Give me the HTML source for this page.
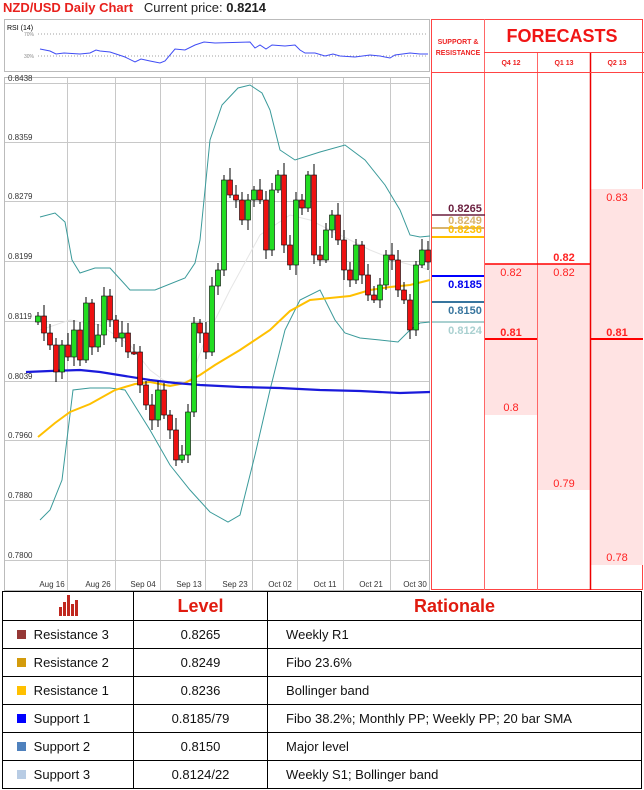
<!DOCTYPE html>
<html><head><meta charset="utf-8"><style>
body{margin:0;width:644px;height:790px;background:#fff;font-family:"Liberation Sans",sans-serif;position:relative;overflow:hidden}
.abs{position:absolute}
table{border-collapse:collapse;position:absolute;left:2px;top:591px;width:640px}
td{border:1px solid #000;height:27px;font-size:13px;color:#111;padding:0}
</style></head><body>
<div class="abs" style="left:3px;top:0;font-size:13px;line-height:16px"><b style="color:#e8211d">NZD/USD Daily Chart</b>&nbsp;&nbsp;&nbsp;<span style="color:#222">Current price: <b>0.8214</b></span></div>
<svg class="abs" style="left:0;top:0" width="644" height="592" id="s">
<rect x="4.5" y="19.5" width="425" height="52" fill="#fff" stroke="#bbb"/>
<text x="7" y="30" font-size="7" fill="#000">RSI (14)</text>
<text x="24" y="36" font-size="5" fill="#888">70%</text><text x="24" y="58" font-size="5" fill="#888">30%</text>
<line x1="38" y1="34" x2="428" y2="34" stroke="#444" stroke-dasharray="1,2" stroke-width=".6"/>
<line x1="38" y1="56" x2="428" y2="56" stroke="#444" stroke-dasharray="1,2" stroke-width=".6"/>
<polyline fill="none" stroke="#3f4cf5" stroke-width="1" points="40,49 50,51 56,54 64,53 80,54 90,53 96,50 100,51 110,52 125,57 135,62 141,59 150,61 160,63 165,61 175,49 185,50 195,45 204,42 215,43 250,42 255,48 260,45 266,49 272,45 285,46 295,45 300,50 305,53 315,53 325,56 333,54 340,56 355,57 370,55 380,56 390,58 395,55 410,53 420,54 428,54"/>
<rect x="4.5" y="77.5" width="425" height="513" fill="#fff" stroke="#bbb"/>
<g id="grid" stroke="#c8c8c8" stroke-width="1"></g>
<g font-size="8" fill="#333" id="lab"></g>
<polyline fill="none" stroke="#e6e6e6" stroke-width="1" points="40,330 70,320 100,325 130,345 150,370 170,385 190,380 205,340 230,290 260,235 290,215 310,220 340,235 370,250 400,262 430,270"/>
<polyline fill="none" stroke="#3a9a9a" stroke-width="1" points="40,217 55,213 65,222 72,260 80,273 95,268 110,268 130,290 155,290 185,278 195,263 200,240 210,140 222,105 238,88 250,85 262,93 270,110 280,150 295,160 320,152 345,145 365,160 385,185 400,210 410,235 420,237 430,236"/>
<polyline fill="none" stroke="#3a9a9a" stroke-width="1" points="40,520 50,510 62,480 73,390 90,388 110,388 125,390 150,430 170,465 190,490 210,512 228,522 240,515 255,455 270,390 285,330 300,300 320,290 335,320 345,333 360,338 380,340 398,342 410,330 420,323 430,322"/>
<polyline fill="none" stroke="#ffc000" stroke-width="2" points="38,437 55,423 70,412 90,404 115,390 135,384 150,382 170,386 185,383 200,375 215,365 240,350 270,330 290,311 310,300 330,298 350,296 370,290 390,287 410,285 430,280"/>
<polyline fill="none" stroke="#1a1adb" stroke-width="2.2" points="26,372 50,371 80,370 100,372 125,376 150,380 175,383 200,385 240,387 280,388 320,390 360,391 400,393 430,392"/>
<g id="c"></g>
<!-- right panel -->
<rect x="431.5" y="19.5" width="211" height="570" fill="none" stroke="#f44"/>
<rect x="485" y="264" width="52" height="151" fill="#ffe3e3"/>
<rect x="538" y="264" width="52" height="226" fill="#ffe3e3"/>
<rect x="591" y="189" width="52" height="376" fill="#ffe3e3"/>
<line x1="484.5" y1="19" x2="484.5" y2="590" stroke="#f66"/>
<line x1="537.5" y1="52" x2="537.5" y2="590" stroke="#f66"/>
<line x1="590.5" y1="52" x2="590.5" y2="590" stroke="#e00" stroke-width="1.5"/>
<line x1="484" y1="52.5" x2="644" y2="52.5" stroke="#f44"/>
<line x1="431" y1="72.5" x2="644" y2="72.5" stroke="#f44"/>
<text x="562" y="42" font-size="18" font-weight="bold" fill="#f01515" text-anchor="middle">FORECASTS</text>
<text x="458" y="44" font-size="7" font-weight="bold" fill="#e22" text-anchor="middle">SUPPORT &amp;</text>
<text x="458" y="55" font-size="7" font-weight="bold" fill="#e22" text-anchor="middle">RESISTANCE</text>
<g font-size="7" font-weight="bold" fill="#e22" text-anchor="middle"><text x="511" y="65">Q4 12</text><text x="564" y="65">Q1 13</text><text x="617" y="65">Q2 13</text></g>
<line x1="485" y1="264" x2="590" y2="264" stroke="#f00" stroke-width="1.5"/>
<line x1="485" y1="339" x2="537" y2="339" stroke="#f00" stroke-width="2"/>
<line x1="591" y1="339" x2="643" y2="339" stroke="#f00" stroke-width="2"/>
<g font-size="11" fill="#f22" text-anchor="middle">
<text x="511" y="276">0.82</text><text x="564" y="276">0.82</text><text x="617" y="201">0.83</text>
<text x="511" y="411">0.8</text><text x="564" y="487">0.79</text><text x="617" y="561">0.78</text>
<g font-weight="bold"><text x="511" y="336">0.81</text><text x="564" y="261">0.82</text><text x="617" y="336">0.81</text></g></g>
<line x1="432" y1="215" x2="485" y2="215" stroke="#6b1f3f" stroke-width="1.5"/>
<line x1="432" y1="228" x2="484" y2="228" stroke="#d9b46c" stroke-width="2"/>
<line x1="432" y1="237" x2="484" y2="237" stroke="#ffc000" stroke-width="2"/>
<line x1="432" y1="276" x2="484" y2="276" stroke="#00f" stroke-width="2"/>
<line x1="432" y1="302" x2="484" y2="302" stroke="#37759e" stroke-width="2"/>
<line x1="432" y1="322" x2="484" y2="322" stroke="#a9d0d0" stroke-width="2"/>
<g font-size="11" font-weight="bold" text-anchor="middle">
<text x="465" y="212" fill="#6b1f3f">0.8265</text><text x="465" y="224" fill="#d9b46c">0.8249</text><text x="465" y="233" fill="#ffc000">0.8236</text>
<text x="465" y="288" fill="#0000ee">0.8185</text><text x="465" y="314" fill="#37759e">0.8150</text><text x="465" y="334" fill="#a9d0d0">0.8124</text></g>
</svg>
<table>
<tr style="height:29px"><td style="width:130px;text-align:center"><svg width="22" height="22" viewBox="0 0 22 22"><g fill="#c0281f"><rect x="2" y="13" width="3" height="9"/><rect x="6" y="8" width="3" height="14"/><rect x="10" y="1" width="3" height="21"/><rect x="14" y="10" width="3" height="12"/><rect x="18" y="6" width="3" height="16"/></g></svg></td>
<td style="width:133px;text-align:center;font-size:18px;font-weight:bold;color:#e01b0f">Level</td>
<td style="text-align:center;font-size:18px;font-weight:bold;color:#e01b0f">Rationale</td></tr>
<tr><td>&nbsp;&nbsp;&nbsp;&nbsp;<span style="display:inline-block;width:9px;height:9px;background:#953735"></span>&nbsp; Resistance 3</td><td style="text-align:center">0.8265</td><td>&nbsp;&nbsp;&nbsp;&nbsp;&nbsp;Weekly R1</td></tr>
<tr><td>&nbsp;&nbsp;&nbsp;&nbsp;<span style="display:inline-block;width:9px;height:9px;background:#d39b0c"></span>&nbsp; Resistance 2</td><td style="text-align:center">0.8249</td><td>&nbsp;&nbsp;&nbsp;&nbsp;&nbsp;Fibo 23.6%</td></tr>
<tr><td>&nbsp;&nbsp;&nbsp;&nbsp;<span style="display:inline-block;width:9px;height:9px;background:#ffc000"></span>&nbsp; Resistance 1</td><td style="text-align:center">0.8236</td><td>&nbsp;&nbsp;&nbsp;&nbsp;&nbsp;Bollinger band</td></tr>
<tr><td>&nbsp;&nbsp;&nbsp;&nbsp;<span style="display:inline-block;width:9px;height:9px;background:#0000ff"></span>&nbsp; Support 1</td><td style="text-align:center">0.8185/79</td><td>&nbsp;&nbsp;&nbsp;&nbsp;&nbsp;Fibo 38.2%; Monthly PP; Weekly PP; 20 bar SMA</td></tr>
<tr><td>&nbsp;&nbsp;&nbsp;&nbsp;<span style="display:inline-block;width:9px;height:9px;background:#4f81bd"></span>&nbsp; Support 2</td><td style="text-align:center">0.8150</td><td>&nbsp;&nbsp;&nbsp;&nbsp;&nbsp;Major level</td></tr>
<tr><td>&nbsp;&nbsp;&nbsp;&nbsp;<span style="display:inline-block;width:9px;height:9px;background:#b8cce4"></span>&nbsp; Support 3</td><td style="text-align:center">0.8124/22</td><td>&nbsp;&nbsp;&nbsp;&nbsp;&nbsp;Weekly S1; Bollinger band</td></tr>
</table>
<script>
var NS="http://www.w3.org/2000/svg";
function el(p,t,a,txt){var e=document.createElementNS(NS,t);for(var k in a)e.setAttribute(k,a[k]);if(txt)e.textContent=txt;p.appendChild(e);return e;}
var g=document.getElementById('grid'),lb=document.getElementById('lab');
var ys=[83,142,201,261,321,381,440,500,560],pl=["0.8438","0.8359","0.8279","0.8199","0.8119","0.8039","0.7960","0.7880","0.7800"];
ys.forEach(function(y,i){el(g,'line',{x1:5,x2:429,y1:y+.5,y2:y+.5});el(lb,'text',{x:8,y:y-2},pl[i]);});
var xs=[67,115,160,205,252,297,343,390],dl=["Aug 16","Aug 26","Sep 04","Sep 13","Sep 23","Oct 02","Oct 11","Oct 21","Oct 30"];
xs.forEach(function(x){el(g,'line',{x1:x+.5,x2:x+.5,y1:78,y2:590});});
[52,98,143,189,235,280,325,371,415].forEach(function(x,i){el(lb,'text',{x:x,y:587,'text-anchor':'middle'},dl[i]);});
var cl=[316,333,345,372,345,357,330,360,303,347,335,296,320,338,333,352,352,385,405,420,390,415,430,460,455,412,323,333,352,286,270,180,195,200,220,200,190,200,250,190,175,245,265,200,208,175,255,260,230,215,240,270,280,245,275,295,300,285,255,260,290,300,330,265,250,262];
var c=document.getElementById('c'),op=322;
cl.forEach(function(v,i){var x=38+i*6,hi=Math.min(op,v)-4-(i*7%9),lo=Math.max(op,v)+3+(i*5%8);
el(c,'line',{x1:x,x2:x,y1:hi,y2:lo,stroke:'#000','stroke-width':1});
var up=v<op;el(c,'rect',{x:x-2.5,y:Math.min(op,v),width:5,height:Math.max(2,Math.abs(op-v)),fill:up?'#22dd22':'#ee1111',stroke:'#000','stroke-width':.6});op=v;});
</script>
</body></html>
